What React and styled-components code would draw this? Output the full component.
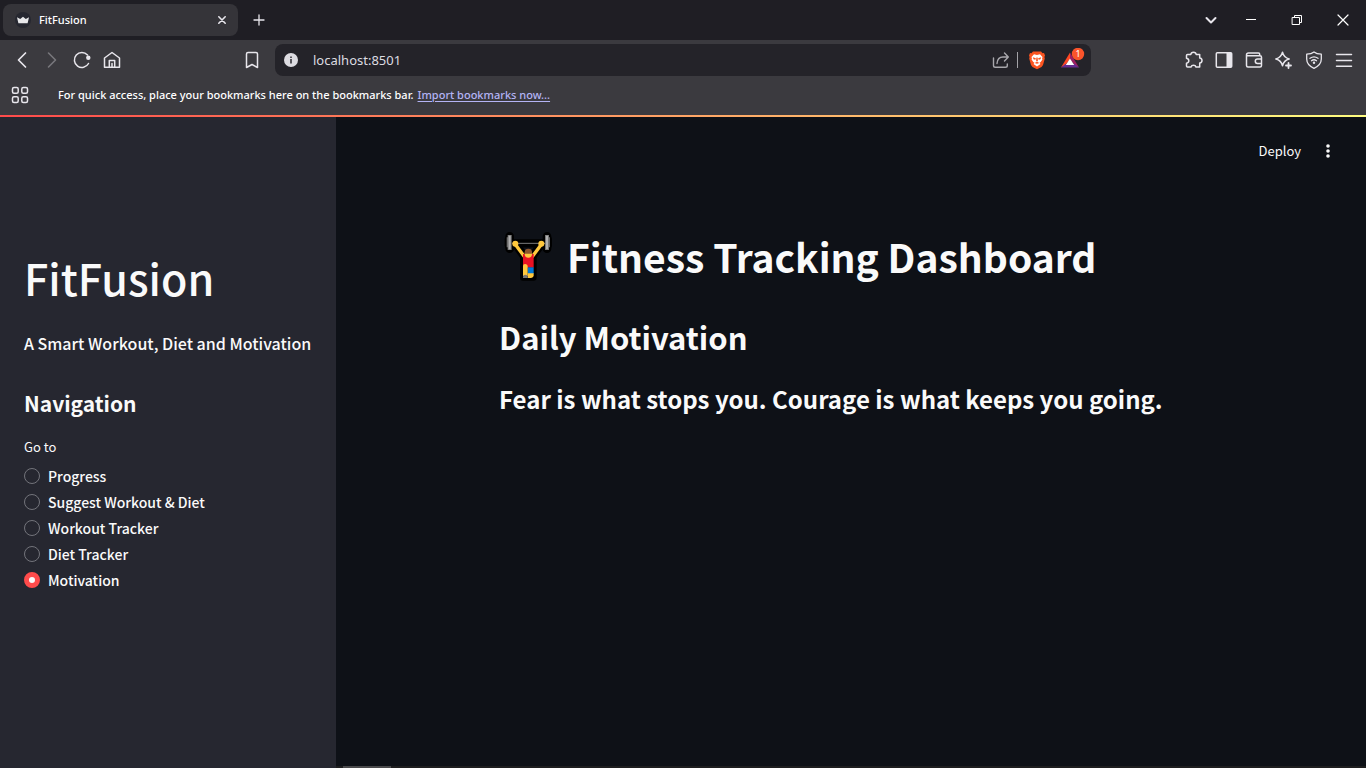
import React, { useState } from "react";
import styled, { createGlobalStyle } from "styled-components";

const appFont = `"Noto Sans CJK SC", "Noto Sans", sans-serif`;
const chromeFont = `"Noto Sans", "Open Sans", sans-serif`;

const GlobalStyle = createGlobalStyle`
  *, *::before, *::after { box-sizing: border-box; }
  body { margin: 0; background: #0e1117; }
  h1, h2, h3, h4, p { margin: 0; }
`;

const Browser = styled.div`
  display: flex;
  flex-direction: column;
  min-height: 100vh;
  font-family: ${chromeFont};
  color: #fff;
`;

const TabStrip = styled.header`
  display: flex;
  align-items: center;
  height: 40px;
  padding-left: 3px;
  background: #1f1e24;
`;

const Tab = styled.div`
  display: flex;
  align-items: center;
  width: 235px;
  height: 32px;
  padding: 0 6px 0 12px;
  border-radius: 8px;
  background: #353439;
`;

const TabTitle = styled.span`
  flex: 1;
  margin-left: 8px;
  font-size: 11px;
  line-height: 16px;
  font-weight: 500;
`;

const IconButton = styled.button`
  display: flex;
  align-items: center;
  justify-content: center;
  flex: none;
  width: ${(p) => p.$width || 30}px;
  height: ${(p) => p.$height || 30}px;
  padding: 0;
  border: 0;
  background: none;
  color: ${(p) => (p.$dim ? "#78777c" : "#e8e6ec")};
`;

const NewTabSlot = styled.div`
  flex: 1;
  padding-left: 6px;
`;

const WindowControls = styled.div`
  display: flex;
  align-items: center;
`;

const Toolbar = styled.nav`
  display: grid;
  grid-template-columns: 1fr minmax(0, 816px) 1fr;
  align-items: center;
  height: 40px;
  background: #3b3a3f;
`;

const ToolbarSide = styled.div`
  display: flex;
  justify-content: ${(p) => (p.$end ? "flex-end" : "space-between")};
  padding: ${(p) => (p.$end ? "0 7px 0 0" : "0 8px 0 7px")};
`;

const ButtonGroup = styled.div`
  display: flex;
  align-items: center;
`;

const AddressBar = styled.div`
  display: flex;
  align-items: center;
  height: 32px;
  padding: 0 4px 0 8px;
  border-radius: 8px;
  background: #242329;
`;

const AddressInput = styled.input`
  flex: 1;
  min-width: 0;
  margin-left: 14px;
  padding: 0;
  border: 0;
  outline: 0;
  background: none;
  color: #dddce1;
  font-family: ${chromeFont};
  font-size: 13px;
`;

const Divider = styled.span`
  width: 1px;
  height: 16px;
  margin-left: 1px;
  background: #a3a2a7;
`;

const BookmarksBar = styled.div`
  display: flex;
  align-items: center;
  height: 35px;
  padding: 0 5px 5px;
  background: #3b3a3f;
  font-size: 11px;
  line-height: 16px;
  font-weight: 500;
`;

const BookmarksHint = styled.p`
  margin-left: 23px;
`;

const ImportLink = styled.a`
  margin-left: 4px;
  color: #b4b4f5;
  text-underline-offset: 2px;
`;

const Decoration = styled.div`
  height: 2px;
  background: linear-gradient(90deg, #ff4b4b, #fffd80);
`;

const Page = styled.div`
  display: flex;
  flex: 1;
  font-family: ${appFont};
  color: #fafafa;
`;

const Sidebar = styled.aside`
  flex: none;
  width: 336px;
  padding: 126px 24px 24px;
  background: #262730;
`;

const Brand = styled.h1`
  font-size: 43px;
  line-height: 68px;
  font-weight: 500;
`;

const Tagline = styled.h4`
  margin-top: 20px;
  font-size: 16px;
  line-height: 24px;
  font-weight: 500;
  white-space: nowrap;
`;

const NavTitle = styled.h2`
  margin-top: 32px;
  font-size: 21px;
  line-height: 32px;
  font-weight: 600;
`;

const RadioGroup = styled.fieldset`
  display: flex;
  flex-direction: column;
  margin: 16px 0 0;
  padding: 0;
  border: 0;
`;

const Legend = styled.legend`
  margin-bottom: 4px;
  padding: 0;
  font-size: 13px;
  line-height: 24px;
`;

const RadioOption = styled.label`
  display: flex;
  align-items: center;
  gap: 8px;
  font-size: 14px;
  line-height: 26px;
  font-weight: 500;
`;

const Radio = styled.input.attrs({ type: "radio" })`
  appearance: none;
  width: 16px;
  height: 16px;
  margin: 0;
  border: 1px solid #73747b;
  border-radius: 50%;
  &:checked {
    border: 5px solid #ff4b4b;
    background: #fafafa;
  }
`;

const Main = styled.main`
  display: flex;
  flex: 1;
  flex-direction: column;
  min-width: 0;
  background: #0e1117;
`;

const AppToolbar = styled.div`
  display: flex;
  align-items: center;
  justify-content: flex-end;
  gap: 12px;
  height: 68px;
  padding-right: 23px;
`;

const DeployButton = styled.button`
  padding: 0 0 2px;
  border: 0;
  background: none;
  color: #fafafa;
  font-family: ${appFont};
  font-size: 13px;
`;

const Content = styled.section`
  flex: 1;
  width: 100%;
  max-width: 736px;
  margin: 0 auto;
  padding: 35px 16px;
`;

const PageTitle = styled.h1`
  display: flex;
  align-items: center;
  gap: 12px;
  font-size: 39px;
  line-height: 72px;
  font-weight: 700;
  white-space: nowrap;
`;

const SectionTitle = styled.h2`
  margin-top: 21px;
  font-size: 31px;
  line-height: 48px;
  font-weight: 600;
`;

const Quote = styled.h3`
  margin-top: 20px;
  font-size: 24px;
  line-height: 36px;
  font-weight: 600;
  white-space: nowrap;
`;

const ScrollTrack = styled.div`
  height: 2px;
  padding-left: 7px;
  background: #1e1e1f;
`;

const ScrollThumb = styled.div`
  width: 48px;
  height: 2px;
  background: #4a4a4c;
`;

const Icon = ({ size = 20, width = 1.5, children }) => (
  <svg width={size} height={size} viewBox={`0 0 ${size} ${size}`} fill="none" stroke="currentColor" strokeWidth={width} strokeLinecap="round" strokeLinejoin="round" aria-hidden="true">
    {children}
  </svg>
);

const Crown = () => (
  <Icon size={16}>
    <circle cx="8" cy="8" r="8" fill="#262730" stroke="none" />
    <path d="M2 5.2 5.2 7 8 4.800 10.8 7 14 5.2 12.6 11.2H3.4Z" fill="#e8e8ea" stroke="none" />
  </Icon>
);

const BraveLion = () => (
  <Icon size={20}>
    <path d="M6 1.5h8l1.6 1.8 1.4-.2 1 2.4-.6 1.5.4 1.5-1.8 6.4-1.5 2L10 19.2l-4.500-2.300-1.500-2L2.200 8.500l.4-1.500L2 5.500l1-2.400 1.400.2Z" fill="#fb5420" stroke="none" />
    <path d="M7 4.300 10 4.900l3-.6 2.500 2.700-.4 1.600.3 1-1.700 2.300-1.200.8 1 1.200-3.500 2.600-3.500-2.600 1-1.200-1.200-.8-1.700-2.300.3-1-.4-1.600Z" fill="#fff" stroke="none" />
    <path d="M5.800 7.300 8.900 8.300 8.300 9.700 6.500 9.200ZM14.200 7.300 11.100 8.300 11.700 9.700 13.500 9.200ZM9.400 7.500h1.200l.3 3.300L10 11.700l-.9-.9ZM7.600 13l2.400-1.200 2.400 1.200-2.400.8Z" fill="#fb5420" stroke="none" />
  </Icon>
);

const BatTriangle = () => (
  <svg width="28" height="24" viewBox="0 0 28 24" aria-hidden="true">
    <path d="M12 4.500 3 19.500l4.500-2.500L12 11Z" fill="#ff4724" />
    <path d="M12 4.500 21 19.500l-4.500-2.500L12 11Z" fill="#9e1f63" />
    <path d="M3 19.500h18l-4.500-3.500h-9Z" fill="#662d91" />
    <path d="M12 10.500 16.200 17H7.800Z" fill="#fff" />
    <circle cx="20" cy="6" r="6.200" fill="#fb542b" />
    <text x="20" y="9" fontSize="9" textAnchor="middle" fill="#fff" fontFamily="Noto Sans, sans-serif">1</text>
  </svg>
);

const Weightlifter = () => (
  <svg width="56" height="56" viewBox="27 24 168 168" role="img" aria-label="Weight lifter">
    <g stroke="#000" fill="#000" strokeLinecap="round" strokeLinejoin="round">
      <path d="M59 49V86M171 49V86" strokeWidth="26" />
      <path d="M51 57V77M179 57V77" strokeWidth="14" />
      <path d="M66 70H165M76 72 102 108M154 72 128 108" strokeWidth="25" />
      <path d="M99 100H131V173H99Z" strokeWidth="18" />
    </g>
    <path d="M66 70H165" stroke="#7b7b7b" strokeWidth="3" />
    <path d="M52 52V82M178 52V82" stroke="#686868" strokeWidth="4" />
    <path d="M59 45V90M171 45V90" stroke="#777" strokeWidth="12" />
    <path d="M59 47V88M171 47V88" stroke="#b2b2b2" strokeWidth="6" />
    <path d="M75 72 104 111M155 72 126 111" stroke="#ffc83d" strokeWidth="10" />
    <circle cx="76" cy="71" r="9" fill="#ffc83d" />
    <circle cx="154" cy="71" r="9" fill="#ffc83d" />
    <path d="M99 102H131V143H99Z" fill="#e81224" />
    <circle cx="115" cy="102" r="11" fill="#ffc83d" />
    <path d="M104 101V96a11 10 0 0 1 22 0v5Z" fill="#8e562e" />
    <path d="M113 142H131V162H113Z" fill="#0078d7" />
    <path d="M99 137Q99 132 105 132 113 132 113 140V168H99Z" fill="#ffc83d" />
    <path d="M113 160H131V166Q130 174 122 174H113Z" fill="#ffc83d" />
    <path d="M99 174V170Q99 164 106 164 113 164 113 170V174Z" fill="#767676" />
  </svg>
);

const pages = ["Progress", "Suggest Workout & Diet", "Workout Tracker", "Diet Tracker", "Motivation"];

export default function App() {
  const [page, setPage] = useState("Motivation");
  const [url, setUrl] = useState("localhost:8501");

  return (
    <Browser>
      <GlobalStyle />
      <TabStrip>
        <Tab>
          <Crown />
          <TabTitle>FitFusion</TabTitle>
          <IconButton $width={20} $height={20} aria-label="Close tab">
            <Icon size={20} width={1.6}><path d="M6.800 6.800 13.200 13.200M13.200 6.800 6.800 13.200" /></Icon>
          </IconButton>
        </Tab>
        <NewTabSlot>
          <IconButton aria-label="New tab">
            <Icon width={1.300}><path d="M10 5V15M5 10H15" /></Icon>
          </IconButton>
        </NewTabSlot>
        <WindowControls>
          <IconButton $width={34} aria-label="Search tabs">
            <Icon width={2}><path d="M5.500 8 10 12.500 14.500 8" /></Icon>
          </IconButton>
          <IconButton $width={46} $height={40} aria-label="Minimize">
            <Icon width={1}><path d="M5 9.500H15" stroke="#fff" strokeLinecap="butt" /></Icon>
          </IconButton>
          <IconButton $width={46} $height={40} aria-label="Restore">
            <Icon width={1}><path d="M5.500 7.500H12.500V14.500H5.500ZM7.500 7.500V5.500H14.500V12.500H12.500" stroke="#fff" strokeLinejoin="miter" /></Icon>
          </IconButton>
          <IconButton $width={46} $height={40} aria-label="Close window">
            <Icon width={1.200}><path d="M5 5 15 15M15 5 5 15" stroke="#fff" /></Icon>
          </IconButton>
        </WindowControls>
      </TabStrip>

      <Toolbar aria-label="Browser toolbar">
        <ToolbarSide>
          <ButtonGroup>
            <IconButton aria-label="Back"><Icon width={1.700}><path d="M13.500 3 6.500 10 13.500 17" /></Icon></IconButton>
            <IconButton $dim aria-label="Forward"><Icon width={1.600}><path d="M6.500 3 13.500 10 6.500 17" /></Icon></IconButton>
            <IconButton aria-label="Reload">
              <Icon>
                <path d="M16.500 13.500A7.500 7.500 0 1 1 15.500 5" />
                <circle cx="16.300" cy="7.800" r="2.200" fill="currentColor" stroke="none" />
              </Icon>
            </IconButton>
            <IconButton aria-label="Home">
              <Icon><path d="M2.500 8 10 2.500 17.500 8V17.300H2.500ZM7.300 17V10.500H12.700V17M10 13.500V17" /></Icon>
            </IconButton>
          </ButtonGroup>
          <IconButton aria-label="Bookmark this tab">
            <Icon><path d="M4.500 4Q4.500 2.500 6 2.500H14Q15.500 2.500 15.500 4V17.500L10 14.500 4.500 17.500Z" /></Icon>
          </IconButton>
        </ToolbarSide>
        <AddressBar>
          <IconButton $width={16} aria-label="View site information">
            <Icon size={16}>
              <circle cx="8" cy="8" r="7" fill="#dddce1" stroke="none" />
              <path d="M8 7V11.500M8 4.500V6" stroke="#35343a" strokeWidth="1.600" strokeLinecap="butt" />
            </Icon>
          </IconButton>
          <AddressInput aria-label="Address" value={url} onChange={(e) => setUrl(e.target.value)} />
          <IconButton aria-label="Share">
            <Icon width={1.400}>
              <g stroke="#a8a7ac"><path d="M2.500 8V15.500Q2.500 17.300 4.300 17.300H14.500Q16.300 17.300 16.300 15.500V14M6 13.500Q6.500 7 12 7H17M13.500 3 17.300 7 13.500 11" /></g>
            </Icon>
          </IconButton>
          <Divider />
          <IconButton $width={38} aria-label="Brave Shields"><BraveLion /></IconButton>
          <IconButton $width={31} aria-label="Brave Rewards"><BatTriangle /></IconButton>
        </AddressBar>
        <ToolbarSide $end>
          <IconButton aria-label="Extensions">
            <Icon><path d="M3.500 4.500H6.800Q7 2.200 9.500 2.200T12.200 4.500H15.700V8Q18 8.300 18 10.500T15.700 13V17H12Q11.500 15.200 9.500 15.200T7 17H3.500Q2.500 17 2.500 16V13.300Q4.800 12.800 4.800 10.800T2.500 8.300V5.500Q2.500 4.500 3.500 4.500Z" /></Icon>
          </IconButton>
          <IconButton aria-label="Sidebar">
            <Icon><rect x="2.300" y="2.800" width="15.400" height="14.400" rx="1" /><path d="M12.500 3H17.500V17H12.500Z" fill="currentColor" stroke="none" /></Icon>
          </IconButton>
          <IconButton aria-label="Wallet">
            <Icon><path d="M2.500 5Q2.500 3 4.500 3H14.500Q15.700 3 15.700 4.200V5.500M2.500 5Q2.500 5.800 4 5.800H16Q17.500 5.800 17.500 7.300V15.500Q17.500 17 16 17H4Q2.500 17 2.500 15.500ZM17.500 9H13.500Q11.300 9 11.300 11.200T13.500 13.400H17.500" /></Icon>
          </IconButton>
          <IconButton aria-label="Leo AI">
            <Icon><path d="M8.500 2.200Q9.800 7.700 15.200 9 9.800 10.300 8.500 15.800 7.200 10.300 1.800 9 7.200 7.700 8.500 2.200Z" /><path d="M14.500 13V18M12 15.500H17" strokeWidth="1.800" /></Icon>
          </IconButton>
          <IconButton aria-label="VPN">
            <Icon width={1.300}><path d="M10 2Q12.500 4 17.300 4.200V9Q17.300 15 10 18.300 2.700 15 2.700 9V4.200Q7.500 4 10 2Z" /><path d="M6 8.300Q10 5.500 14 8.300M7.500 10.700Q10 8.800 12.500 10.700" /><circle cx="10" cy="12.800" r="1.200" fill="currentColor" stroke="none" /></Icon>
          </IconButton>
          <IconButton aria-label="Menu">
            <Icon><path d="M2.500 4.500H17.500M2.500 10.500H17.500M2.500 16.200H17.500" /></Icon>
          </IconButton>
        </ToolbarSide>
      </Toolbar>

      <BookmarksBar>
        <IconButton aria-label="All bookmarks">
          <Icon>
            <rect x="2.500" y="2.500" width="5.700" height="5.700" rx="1.500" />
            <rect x="11.800" y="2.500" width="5.700" height="5.700" rx="1.500" />
            <rect x="2.500" y="11.800" width="5.700" height="5.700" rx="1.500" />
            <rect x="11.800" y="11.800" width="5.700" height="5.700" rx="1.500" />
          </Icon>
        </IconButton>
        <BookmarksHint>For quick access, place your bookmarks here on the bookmarks bar.</BookmarksHint>
        <ImportLink href="#import">Import bookmarks now...</ImportLink>
      </BookmarksBar>
      <Decoration />

      <Page>
        <Sidebar>
          <Brand>FitFusion</Brand>
          <Tagline>A Smart Workout, Diet and Motivation</Tagline>
          <NavTitle>Navigation</NavTitle>
          <RadioGroup>
            <Legend>Go to</Legend>
            {pages.map((name) => (
              <RadioOption key={name}>
                <Radio name="page" checked={page === name} onChange={() => setPage(name)} />
                {name}
              </RadioOption>
            ))}
          </RadioGroup>
        </Sidebar>
        <Main>
          <AppToolbar>
            <DeployButton>Deploy</DeployButton>
            <IconButton aria-label="Main menu">
              <Icon><g fill="#fafafa" stroke="none"><circle cx="10" cy="5" r="1.800" /><circle cx="10" cy="10" r="1.800" /><circle cx="10" cy="15" r="1.800" /></g></Icon>
            </IconButton>
          </AppToolbar>
          <Content>
            <PageTitle>
              <Weightlifter />
              <span>Fitness Tracking Dashboard</span>
            </PageTitle>
            <SectionTitle>Daily Motivation</SectionTitle>
            <Quote>Fear is what stops you. Courage is what keeps you going.</Quote>
          </Content>
          <ScrollTrack><ScrollThumb /></ScrollTrack>
        </Main>
      </Page>
    </Browser>
  );
}
